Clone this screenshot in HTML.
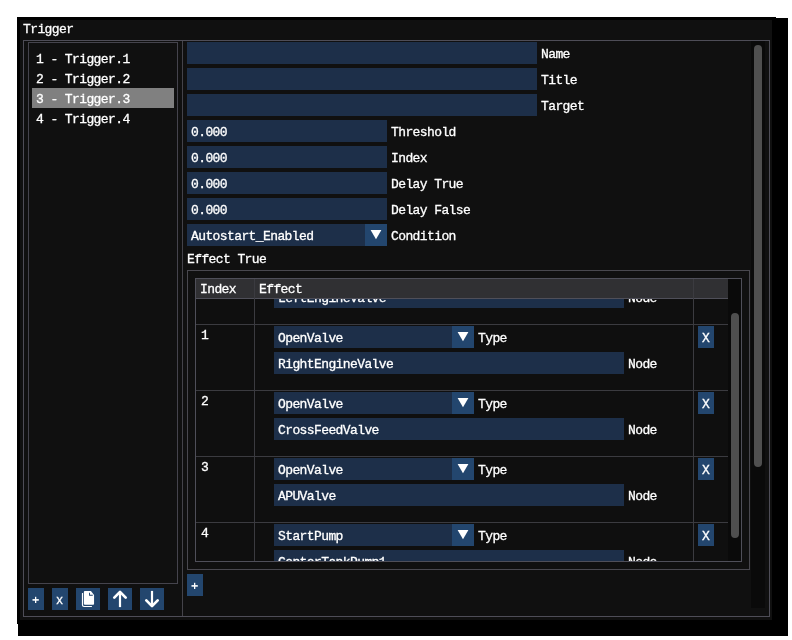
<!DOCTYPE html>
<html><head><meta charset="utf-8">
<style>
*{margin:0;padding:0;box-sizing:border-box}
html,body{width:792px;height:640px;background:#fff;overflow:hidden;position:relative}
div,svg{position:absolute}
.t{font-family:"Liberation Mono",monospace;font-size:13px;letter-spacing:-0.6px;line-height:12px;color:#fff;white-space:pre;-webkit-text-stroke:0.3px #fff}
.f{background:#1d2f49}
.b{background:#23466e}
.bd{border:1px solid #4c4b55}
.tb{border:1px solid #4f4f59}
.rl{background:#3b3b40}
.tri{width:22px;height:22px}
</style></head><body><div id="root" style="left:0;top:0;width:792px;height:640px;will-change:transform;background:#fff">
<div style="left:18px;top:18px;width:770px;height:618px;background:#000"></div>
<div style="left:17px;top:17px;width:759px;height:607px;background:#000"></div>
<div style="left:20px;top:20px;width:752px;height:600px;background:#101010"></div>
<div class="t" style="left:23px;top:24px">Trigger</div>

<div class="bd" style="border-color:#4e4d57;left:23px;top:40px;width:747px;height:577px"></div>
<div class="bd" style="border-color:#45444d;left:28px;top:42px;width:150px;height:542px"></div>
<div style="left:32px;top:88px;width:142px;height:20px;background:#808080"></div>
<div class="t" style="left:36px;top:54px">1 - Trigger.1</div>
<div class="t" style="left:36px;top:74px">2 - Trigger.2</div>
<div class="t" style="left:36px;top:94px">3 - Trigger.3</div>
<div class="t" style="left:36px;top:114px">4 - Trigger.4</div>
<div style="left:182px;top:41px;width:1px;height:575px;background:#44434a"></div>

<div class="b" style="left:28px;top:588px;width:16px;height:22px"></div>
<svg style="left:28px;top:588px" width="16" height="22" viewBox="0 0 16 22"><rect x="4.5" y="11.1" width="6.3" height="1.6" fill="#fff"/><rect x="7" y="8.8" width="1.3" height="6.2" fill="#fff"/></svg>
<div class="b" style="left:52px;top:588px;width:16px;height:22px"></div>
<div class="t" style="left:56px;top:595px;font-size:12px;letter-spacing:0">x</div>
<div class="b" style="left:76px;top:588px;width:24px;height:22px"></div>
<svg style="left:76px;top:588px" width="24" height="22" viewBox="0 0 24 22">
<path d="M8.9 3.03 H14.9 L18.06 6.9 V15.8 Q18.06 16.8 17.06 16.8 H8.9 Q7.9 16.8 7.9 15.8 V4.03 Q7.9 3.03 8.9 3.03 Z" fill="#fff"/>
<path d="M13.06 4.75 H14 V6.8 H16.8 V7.7 H13.06 Z" fill="#23466e"/>
<path d="M5.9 5.2 Q5.9 5 6.3 5 H7.1 V16.9 Q7.1 17.9 8.1 17.9 H15.9 V19.1 H8 Q5.9 19.1 5.9 17 Z" fill="#fff"/>
</svg>
<div class="b" style="left:108px;top:588px;width:24px;height:22px"></div>
<svg style="left:108px;top:588px" width="24" height="22" viewBox="0 0 24 22" fill="none" stroke="#fff" stroke-width="2.7" stroke-linecap="round" stroke-linejoin="round">
<polyline points="6.3,9.6 12,3.9 17.7,9.6"/><line x1="12" y1="5" x2="12" y2="19.1" stroke-linecap="butt" stroke-width="2.2"/>
</svg>
<div class="b" style="left:140px;top:588px;width:24px;height:22px"></div>
<svg style="left:140px;top:588px" width="24" height="22" viewBox="0 0 24 22" fill="none" stroke="#fff" stroke-width="2.7" stroke-linecap="round" stroke-linejoin="round">
<polyline points="6.3,12.4 12,18.1 17.7,12.4"/><line x1="12" y1="2.9" x2="12" y2="17" stroke-linecap="butt" stroke-width="2.2"/>
</svg>

<div class="f" style="left:187px;top:42px;width:350px;height:22px"></div>
<div class="t" style="left:541px;top:49px">Name</div>
<div class="f" style="left:187px;top:68px;width:350px;height:22px"></div>
<div class="t" style="left:541px;top:75px">Title</div>
<div class="f" style="left:187px;top:94px;width:350px;height:22px"></div>
<div class="t" style="left:541px;top:101px">Target</div>

<div class="f" style="left:187px;top:120px;width:200px;height:22px"></div>
<div class="t" style="left:191px;top:127px">0.000</div>
<div class="t" style="left:391px;top:127px">Threshold</div>
<div class="f" style="left:187px;top:146px;width:200px;height:22px"></div>
<div class="t" style="left:191px;top:153px">0.000</div>
<div class="t" style="left:391px;top:153px">Index</div>
<div class="f" style="left:187px;top:172px;width:200px;height:22px"></div>
<div class="t" style="left:191px;top:179px">0.000</div>
<div class="t" style="left:391px;top:179px">Delay True</div>
<div class="f" style="left:187px;top:198px;width:200px;height:22px"></div>
<div class="t" style="left:191px;top:205px">0.000</div>
<div class="t" style="left:391px;top:205px">Delay False</div>
<div class="f" style="left:187px;top:224px;width:178px;height:22px"></div>
<div class="b" style="left:365px;top:224px;width:22px;height:22px"></div>
<svg class="tri" style="left:365px;top:224px" viewBox="0 0 22 22"><polygon points="5.6,6 16.4,6 11,15.2" fill="#fff"/></svg>
<div class="t" style="left:191px;top:231px">Autostart_Enabled</div>
<div class="t" style="left:391px;top:231px">Condition</div>

<div class="t" style="left:187px;top:254px">Effect True</div>
<div class="bd" style="border-color:#49484f;left:187px;top:270px;width:563px;height:300px"></div>
<div style="left:196px;top:279px;width:545px;height:282px;background:#0f0f0f"></div>
<div style="left:196px;top:298px;width:532px;height:263px;overflow:hidden">
<div class="t" style="left:5px;top:-34px">0</div>
<div class="f" style="left:78px;top:-38px;width:178px;height:22px"></div>
<div class="b" style="left:256px;top:-38px;width:22px;height:22px"></div>
<svg class="tri" style="left:256px;top:-38px" viewBox="0 0 22 22"><polygon points="5.6,6 16.4,6 11,15.2" fill="#fff"/></svg>
<div class="t" style="left:82px;top:-31px">OpenValve</div>
<div class="t" style="left:282px;top:-31px">Type</div>
<div class="b" style="left:502px;top:-38px;width:16px;height:22px"></div>
<div class="t" style="left:506px;top:-31px">X</div>
<div class="f" style="left:78px;top:-12px;width:350px;height:22px"></div>
<div class="t" style="left:82px;top:-5px">LeftEngineValve</div>
<div class="t" style="left:432px;top:-5px">Node</div>
<div class="rl" style="left:0;top:26px;width:532px;height:1px"></div>
<div class="t" style="left:5px;top:32px">1</div>
<div class="f" style="left:78px;top:28px;width:178px;height:22px"></div>
<div class="b" style="left:256px;top:28px;width:22px;height:22px"></div>
<svg class="tri" style="left:256px;top:28px" viewBox="0 0 22 22"><polygon points="5.6,6 16.4,6 11,15.2" fill="#fff"/></svg>
<div class="t" style="left:82px;top:35px">OpenValve</div>
<div class="t" style="left:282px;top:35px">Type</div>
<div class="b" style="left:502px;top:28px;width:16px;height:22px"></div>
<div class="t" style="left:506px;top:35px">X</div>
<div class="f" style="left:78px;top:54px;width:350px;height:22px"></div>
<div class="t" style="left:82px;top:61px">RightEngineValve</div>
<div class="t" style="left:432px;top:61px">Node</div>
<div class="rl" style="left:0;top:92px;width:532px;height:1px"></div>
<div class="t" style="left:5px;top:98px">2</div>
<div class="f" style="left:78px;top:94px;width:178px;height:22px"></div>
<div class="b" style="left:256px;top:94px;width:22px;height:22px"></div>
<svg class="tri" style="left:256px;top:94px" viewBox="0 0 22 22"><polygon points="5.6,6 16.4,6 11,15.2" fill="#fff"/></svg>
<div class="t" style="left:82px;top:101px">OpenValve</div>
<div class="t" style="left:282px;top:101px">Type</div>
<div class="b" style="left:502px;top:94px;width:16px;height:22px"></div>
<div class="t" style="left:506px;top:101px">X</div>
<div class="f" style="left:78px;top:120px;width:350px;height:22px"></div>
<div class="t" style="left:82px;top:127px">CrossFeedValve</div>
<div class="t" style="left:432px;top:127px">Node</div>
<div class="rl" style="left:0;top:158px;width:532px;height:1px"></div>
<div class="t" style="left:5px;top:164px">3</div>
<div class="f" style="left:78px;top:160px;width:178px;height:22px"></div>
<div class="b" style="left:256px;top:160px;width:22px;height:22px"></div>
<svg class="tri" style="left:256px;top:160px" viewBox="0 0 22 22"><polygon points="5.6,6 16.4,6 11,15.2" fill="#fff"/></svg>
<div class="t" style="left:82px;top:167px">OpenValve</div>
<div class="t" style="left:282px;top:167px">Type</div>
<div class="b" style="left:502px;top:160px;width:16px;height:22px"></div>
<div class="t" style="left:506px;top:167px">X</div>
<div class="f" style="left:78px;top:186px;width:350px;height:22px"></div>
<div class="t" style="left:82px;top:193px">APUValve</div>
<div class="t" style="left:432px;top:193px">Node</div>
<div class="rl" style="left:0;top:224px;width:532px;height:1px"></div>
<div class="t" style="left:5px;top:230px">4</div>
<div class="f" style="left:78px;top:226px;width:178px;height:22px"></div>
<div class="b" style="left:256px;top:226px;width:22px;height:22px"></div>
<svg class="tri" style="left:256px;top:226px" viewBox="0 0 22 22"><polygon points="5.6,6 16.4,6 11,15.2" fill="#fff"/></svg>
<div class="t" style="left:82px;top:233px">StartPump</div>
<div class="t" style="left:282px;top:233px">Type</div>
<div class="b" style="left:502px;top:226px;width:16px;height:22px"></div>
<div class="t" style="left:506px;top:233px">X</div>
<div class="f" style="left:78px;top:252px;width:350px;height:22px"></div>
<div class="t" style="left:82px;top:259px">CenterTankPump1</div>
<div class="t" style="left:432px;top:259px">Node</div>
</div>
<div style="left:196px;top:279px;width:532px;height:19px;background:#303033"></div>
<div style="left:196px;top:298px;width:532px;height:1px;background:#4f4f59"></div>
<div class="rl" style="left:254px;top:279px;width:1px;height:282px"></div>
<div class="rl" style="left:693px;top:279px;width:1px;height:282px"></div>
<div class="t" style="left:200px;top:284px">Index</div>
<div class="t" style="left:259px;top:284px">Effect</div>
<div class="tb" style="left:195px;top:278px;width:547px;height:284px"></div>
<div style="left:728px;top:279px;width:13px;height:282px;background:#0a0a0a"></div>
<div style="left:731px;top:313px;width:8px;height:225px;border-radius:4px;background:#4f4f4f"></div>

<div class="b" style="left:187px;top:574px;width:16px;height:22px"></div>
<svg style="left:187px;top:574px" width="16" height="22" viewBox="0 0 16 22"><rect x="4.5" y="11.1" width="6.3" height="1.6" fill="#fff"/><rect x="7" y="8.8" width="1.3" height="6.2" fill="#fff"/></svg>

<div style="left:751px;top:41px;width:14px;height:567px;background:#0a0a0a"></div>
<div style="left:754px;top:45px;width:8px;height:422px;border-radius:4px;background:#4f4f4f"></div>
</div></body></html>
